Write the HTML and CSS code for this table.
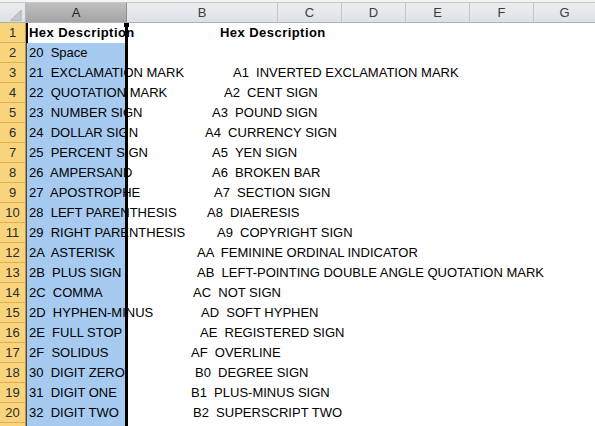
FILE: index.html
```html
<!DOCTYPE html>
<html>
<head>
<meta charset="utf-8">
<link rel="stylesheet" href="styles.css">
</head>
<body>
<div class="sheet">
  <div class="hdr">
    <div class="corner"><svg width="26" height="19" viewBox="0 0 26 19"><polygon points="11,18 22,18 22,7" fill="#c3c7cc" stroke="#b0b4ba" stroke-width="1"/></svg></div>
    <div class="ch sel">A</div>
    <div class="ch w151">B</div>
    <div class="ch w64">C</div>
    <div class="ch w64">D</div>
    <div class="ch w64">E</div>
    <div class="ch w64">F</div>
    <div class="ch grow">G</div>
  </div>

  <div class="row"><div class="rh">1</div><div class="ca active"><span class="bold">Hex Description</span></div><div class="spill" style="--x:93px"><span class="bold">Hex Description</span></div></div>
  <div class="row"><div class="rh">2</div><div class="ca">20  Space</div><div class="spill"></div></div>
  <div class="row"><div class="rh">3</div><div class="ca">21  EXCLAMATION MARK</div><div class="spill" style="--x:106px">A1  INVERTED EXCLAMATION MARK</div></div>
  <div class="row"><div class="rh">4</div><div class="ca">22  QUOTATION MARK</div><div class="spill" style="--x:97px">A2  CENT SIGN</div></div>
  <div class="row"><div class="rh">5</div><div class="ca">23  NUMBER SIGN</div><div class="spill" style="--x:85px">A3  POUND SIGN</div></div>
  <div class="row"><div class="rh">6</div><div class="ca">24  DOLLAR SIGN</div><div class="spill" style="--x:78px">A4  CURRENCY SIGN</div></div>
  <div class="row"><div class="rh">7</div><div class="ca">25  PERCENT SIGN</div><div class="spill" style="--x:85px">A5  YEN SIGN</div></div>
  <div class="row"><div class="rh">8</div><div class="ca">26  AMPERSAND</div><div class="spill" style="--x:85px">A6  BROKEN BAR</div></div>
  <div class="row"><div class="rh">9</div><div class="ca">27  APOSTROPHE</div><div class="spill" style="--x:87px">A7  SECTION SIGN</div></div>
  <div class="row"><div class="rh">10</div><div class="ca">28  LEFT PARENTHESIS</div><div class="spill" style="--x:80px">A8  DIAERESIS</div></div>
  <div class="row"><div class="rh">11</div><div class="ca">29  RIGHT PARENTHESIS</div><div class="spill" style="--x:90px">A9  COPYRIGHT SIGN</div></div>
  <div class="row"><div class="rh">12</div><div class="ca">2A  ASTERISK</div><div class="spill" style="--x:70px">AA  FEMININE ORDINAL INDICATOR</div></div>
  <div class="row"><div class="rh">13</div><div class="ca">2B  PLUS SIGN</div><div class="spill" style="--x:70px">AB  LEFT-POINTING DOUBLE ANGLE QUOTATION MARK</div></div>
  <div class="row"><div class="rh">14</div><div class="ca">2C  COMMA</div><div class="spill" style="--x:66px">AC  NOT SIGN</div></div>
  <div class="row"><div class="rh">15</div><div class="ca">2D  HYPHEN-MINUS</div><div class="spill" style="--x:74px">AD  SOFT HYPHEN</div></div>
  <div class="row"><div class="rh">16</div><div class="ca">2E  FULL STOP</div><div class="spill" style="--x:73px">AE  REGISTERED SIGN</div></div>
  <div class="row"><div class="rh">17</div><div class="ca">2F  SOLIDUS</div><div class="spill" style="--x:64px">AF  OVERLINE</div></div>
  <div class="row"><div class="rh">18</div><div class="ca">30  DIGIT ZERO</div><div class="spill" style="--x:68px">B0  DEGREE SIGN</div></div>
  <div class="row"><div class="rh">19</div><div class="ca">31  DIGIT ONE</div><div class="spill" style="--x:64px">B1  PLUS-MINUS SIGN</div></div>
  <div class="row"><div class="rh">20</div><div class="ca">32  DIGIT TWO</div><div class="spill" style="--x:66px">B2  SUPERSCRIPT TWO</div></div>
  <div class="row"><div class="rh"></div><div class="ca"></div><div class="spill"></div></div>
</div>
</body>
</html>
```

FILE: styles.css
```css
html, body {
  margin: 0;
  padding: 0;
  background: #ffffff;
  overflow: hidden;
}

.sheet {
  width: 595px;
  font-family: "Liberation Sans", Arial, sans-serif;
  font-size: 13px;
  color: #000;
}

.hdr {
  display: flex;
  padding-top: 2px;
  background: #f4f4f4;
}

.corner,
.ch {
  height: 19px;
  border-top: 1px solid #c3c8ce;
  border-bottom: 1px solid #a9b0b8;
  border-right: 1px solid #c4c8cd;
  background: linear-gradient(#eceef1, #dde1e6);
  box-sizing: content-box;
  display: flex;
  align-items: center;
  justify-content: center;
  color: #3a3d42;
  font-size: 13px;
  line-height: 19px;
}

.corner {
  width: 25px;
  border-right-color: #b5b9bf;
}

.corner svg {
  display: block;
}

.ch.sel {
  width: 100px;
  background: linear-gradient(#c0c0c0, #a4a4a4);
  border-right-color: #8f8f8f;
  color: #222;
}

.ch.w151 { width: 150px; }
.ch.w64 { width: 63px; }
.ch.grow { flex: 1; border-right: none; }

.row {
  display: grid;
  grid-template-columns: 26px 101px 1fr;
  height: 20px;
}

.rh {
  box-sizing: border-box;
  height: 20px;
  background: #f8d47c;
  border-bottom: 1px solid #e2ad52;
  border-right: 1px solid #b8914a;
  text-align: center;
  line-height: 19px;
  color: #2b2b2b;
  font-size: 13px;
}

.ca {
  position: relative;
  box-sizing: border-box;
  background: #a6caf0;
  border-left: 1px solid #4a4a3a;
  padding-left: 2px;
  line-height: 20px;
  white-space: pre;
  overflow: visible;
  z-index: 0;
}

.ca::after {
  content: "";
  position: absolute;
  top: 0;
  bottom: 0;
  right: -1px;
  width: 3px;
  background: #000;
  z-index: 2;
}

.ca.active {
  background: #ffffff;
  border-left: 2px solid #000;
  padding-left: 1px;
}

.ca.active::before {
  content: "";
  position: absolute;
  top: 0;
  right: -2px;
  width: 5px;
  height: 4px;
  background: #000;
  z-index: 2;
}

.bold {
  font-weight: bold;
  letter-spacing: 0.45px;
}

.spill {
  padding-left: var(--x, 0px);
  line-height: 20px;
  white-space: pre;
}
```
